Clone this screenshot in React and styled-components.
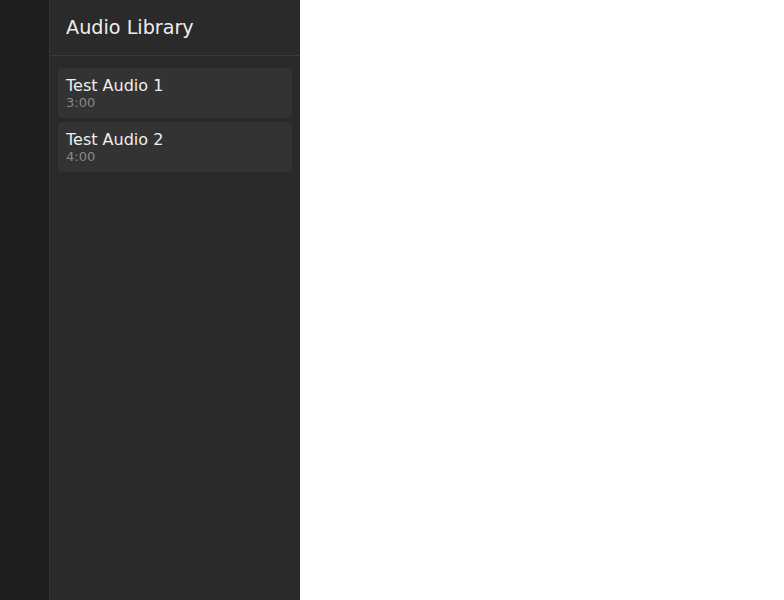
import React from 'react';
import styled, { createGlobalStyle } from 'styled-components';

const GlobalStyle = createGlobalStyle`
  html, body {
    margin: 0;
    padding: 0;
    background: #fff;
    font-family: "DejaVu Sans", sans-serif;
  }
`;

const Layout = styled.div`
  display: flex;
  height: 100vh;
`;

const Rail = styled.div`
  width: 49px;
  background: #1e1e1e;
  border-right: 1px solid #333;
`;

const Panel = styled.aside`
  width: 250px;
  background: #2a2a2a;
  display: flex;
  flex-direction: column;
`;

const Header = styled.header`
  padding: 16px;
  border-bottom: 1px solid #3a3a3a;
  color: #eee;
  font-size: 19.2px;
  line-height: 23px;
`;

const List = styled.ul`
  list-style: none;
  margin: 0;
  padding: 12px 8px;
  display: flex;
  flex-direction: column;
  gap: 4px;
`;

const Item = styled.li`
  background: #333;
  border-radius: 4px;
  padding: 8px;
  cursor: pointer;
`;

const Title = styled.div`
  color: #eee;
  font-size: 16px;
  line-height: 19px;
`;

const Duration = styled.div`
  color: #888;
  font-size: 13px;
  line-height: 15px;
`;

const Main = styled.main`
  flex: 1;
  background: #fff;
`;

const tracks = [
  { id: 1, title: 'Test Audio 1', duration: '3:00' },
  { id: 2, title: 'Test Audio 2', duration: '4:00' },
];

export default function App() {
  return (
    <>
      <GlobalStyle />
      <Layout>
        <Rail />
        <Panel>
          <Header>Audio Library</Header>
          <List>
            {tracks.map((t) => (
              <Item key={t.id}>
                <Title>{t.title}</Title>
                <Duration>{t.duration}</Duration>
              </Item>
            ))}
          </List>
        </Panel>
        <Main />
      </Layout>
    </>
  );
}
